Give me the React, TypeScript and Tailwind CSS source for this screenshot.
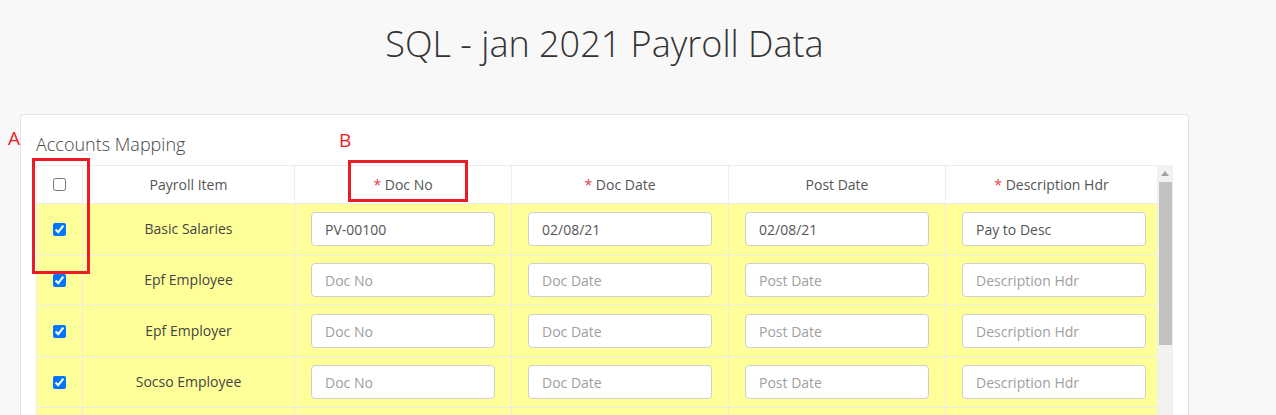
import React from "react";

type Row = { item: string; docNo?: string; docDate?: string; postDate?: string; desc?: string };

const rows: Row[] = [
  { item: "Basic Salaries", docNo: "PV-00100", docDate: "02/08/21", postDate: "02/08/21", desc: "Pay to Desc" },
  { item: "Epf Employee" },
  { item: "Epf Employer" },
  { item: "Socso Employee" },
  { item: "" },
];

function Req({ label }: { label: string }) {
  return (
    <span>
      <span className="text-[#e83b3b]">*</span> {label}
    </span>
  );
}

function Field({ value, placeholder }: { value?: string; placeholder: string }) {
  return (
    <input
      readOnly
      defaultValue={value}
      placeholder={placeholder}
      className="w-[184px] h-[34px] rounded-[4px] border border-[#cfcfcf] bg-white px-[13px] text-[14px] text-[#555] placeholder:text-[#a0a0a0] outline-none"
    />
  );
}

const cell = "flex items-center justify-center border-r border-b border-[#ececec]";
const fieldCell = "flex items-center pl-[16px] border-r border-b border-[#ececec]";

export default function App() {
  return (
    <div
      className="relative h-[415px] overflow-hidden bg-[#f8f8f8]"
      style={{ fontFamily: '"Open Sans", sans-serif' }}
    >
      <div className="ml-[20px] w-[1169px]">
        <h1 className="pt-[24px] h-[64px] text-center text-[36px] leading-[40px] font-light text-[#333]">
          SQL - jan 2021 Payroll Data
        </h1>

        <div className="mt-[50px] rounded-[4px] border border-[#e3e3e3] bg-white px-[15px] pt-[17px] pb-4">
          <div className="text-[18px] leading-[24px] font-light text-[#444]">Accounts Mapping</div>

          <div className="mt-[9px] flex">
            <div className="w-[1121px] border-t border-l border-[#ececec]">
              {/* header */}
              <div className="grid grid-cols-[46px_212px_217px_217px_217px_212px] h-[38px] text-[14px] text-[#555]">
                <div className={cell}>
                  <input type="checkbox" className="w-[13px] h-[13px]" />
                </div>
                <div className={cell}>Payroll Item</div>
                <div className={cell}><Req label="Doc No" /></div>
                <div className={cell}><Req label="Doc Date" /></div>
                <div className={cell}>Post Date</div>
                <div className={cell}><Req label="Description Hdr" /></div>
              </div>

              {rows.map((r, i) => (
                <div
                  key={i}
                  className="grid grid-cols-[46px_212px_217px_217px_217px_212px] h-[51px] bg-[#ffff99] text-[14px] text-[#444]"
                >
                  <div className={cell}>
                    <input type="checkbox" defaultChecked className="w-[13px] h-[13px]" />
                  </div>
                  <div className={`${cell} pb-[2px]`}>{r.item}</div>
                  <div className={fieldCell}><Field value={r.docNo} placeholder="Doc No" /></div>
                  <div className={fieldCell}><Field value={r.docDate} placeholder="Doc Date" /></div>
                  <div className={fieldCell}><Field value={r.postDate} placeholder="Post Date" /></div>
                  <div className={fieldCell}><Field value={r.desc} placeholder="Description Hdr" /></div>
                </div>
              ))}
            </div>

            {/* scrollbar */}
            <div className="w-[16px] shrink-0 bg-[#f1f1f1] flex flex-col items-center">
              <div className="h-[17px] flex items-center justify-center">
                <svg width="8" height="5" viewBox="0 0 8 5">
                  <path d="M4 0 L8 5 L0 5 Z" fill="#a3a3a3" />
                </svg>
              </div>
              <div className="w-[13px] h-[163px] bg-[#c1c1c1]" />
            </div>
          </div>
        </div>
      </div>

      {/* annotations */}
      <div className="absolute left-[8px] top-[126px] text-[19px] leading-[24px] text-[#ed1c24]">A</div>
      <div className="absolute left-[32px] top-[158px] w-[58px] h-[116px] border-[3px] border-[#ed1c24]" />
      <div className="absolute left-[339px] top-[128px] text-[19px] leading-[24px] text-[#ed1c24]">B</div>
      <div className="absolute left-[348px] top-[160px] w-[120px] h-[42px] border-[3px] border-[#ed1c24]" />
    </div>
  );
}
